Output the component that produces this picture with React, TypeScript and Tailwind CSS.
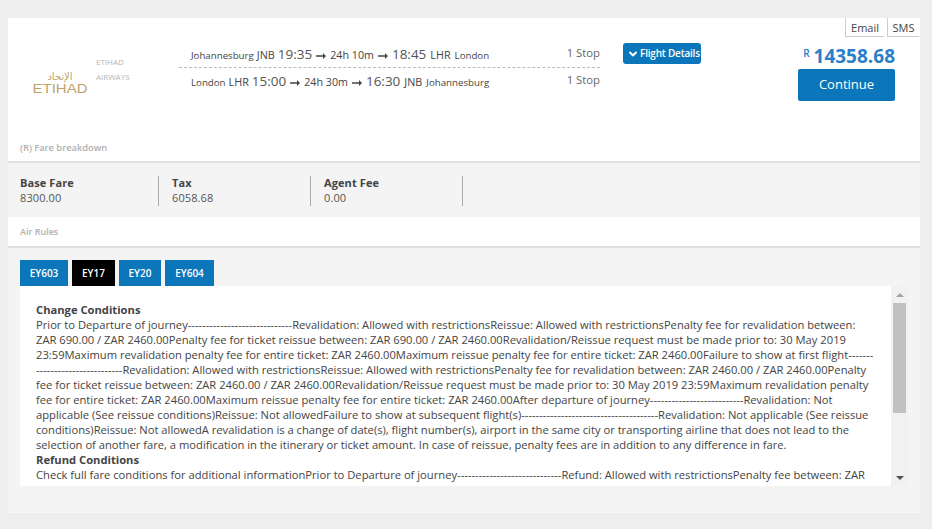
import React from 'react';
import { ChevronDown } from 'lucide-react';

const blue = 'bg-[#0b76ba]';

const tabs = [
  { name: 'EY603', width: 'w-[48px]' },
  { name: 'EY17', width: 'w-[43px]' },
  { name: 'EY20', width: 'w-[42px]' },
  { name: 'EY604', width: 'w-[49px]' },
];

const rulesLines = [
  'Prior to Departure of journey-----------------------------Revalidation: Allowed with restrictionsReissue: Allowed with restrictionsPenalty fee for revalidation between:',
  'ZAR 690.00 / ZAR 2460.00Penalty fee for ticket reissue between: ZAR 690.00 / ZAR 2460.00Revalidation/Reissue request must be made prior to: 30 May 2019',
  '23:59Maximum revalidation penalty fee for entire ticket: ZAR 2460.00Maximum reissue penalty fee for entire ticket: ZAR 2460.00Failure to show at first flight-------',
  '------------------------Revalidation: Allowed with restrictionsReissue: Allowed with restrictionsPenalty fee for revalidation between: ZAR 2460.00 / ZAR 2460.00Penalty',
  'fee for ticket reissue between: ZAR 2460.00 / ZAR 2460.00Revalidation/Reissue request must be made prior to: 30 May 2019 23:59Maximum revalidation penalty',
  'fee for entire ticket: ZAR 2460.00Maximum reissue penalty fee for entire ticket: ZAR 2460.00After departure of journey--------------------------Revalidation: Not',
  'applicable (See reissue conditions)Reissue: Not allowedFailure to show at subsequent flight(s)--------------------------------------Revalidation: Not applicable (See reissue',
  'conditions)Reissue: Not allowedA revalidation is a change of date(s), flight number(s), airport in the same city or transporting airline that does not lead to the',
  'selection of another fare, a modification in the itinerary or ticket amount. In case of reissue, penalty fees are in addition to any difference in fare.',
];

const Arrow = () => (
  <svg width="10" height="6" viewBox="0 0 10 6" className="mx-[4px] self-center -mt-[1px] shrink-0">
    <path d="M0 2.2H7V0L10 3 7 6V3.8H0Z" fill="#444" />
  </svg>
);

const Leg = ({ from, fromCode, dep, dur, arr, toCode, to }: { from: string; fromCode: string; dep: string; dur: string; arr: string; toCode: string; to: string }) => (
  <div className="flex items-baseline whitespace-nowrap text-[#444] h-[24px]">
    <span className="text-[9.7px]">{from}</span>
    <span className="text-[10.8px] ml-[3px]">{fromCode}</span>
    <span className="text-[13.5px] ml-[3px] text-[#555]">{dep}</span>
    <Arrow />
    <span className="text-[10.7px]">{dur}</span>
    <Arrow />
    <span className="text-[13.5px] text-[#555]">{arr}</span>
    <span className="text-[10.8px] ml-[4px]">{toCode}</span>
    <span className="text-[9.7px] ml-[4px]">{to}</span>
  </div>
);

const Fare = ({ label, value }: { label: string; value: string }) => (
  <div className="w-[139px] h-[30px] border-r border-[#aaa] leading-[15px] mr-[13px]">
    <div className="-mt-[1px]">
      <div className="text-[11px] font-bold text-[#444] tracking-[0.1px]">{label}</div>
      <div className="text-[11px] text-[#555] tracking-[0.1px]">{value}</div>
    </div>
  </div>
);

export default function App() {
  return (
    <div className="min-h-[529px] bg-[#eeeeee] pt-[18px] pl-[8px] pr-[12px] pb-[14px] font-['Open_Sans',sans-serif]">
      <div className="bg-[#f4f4f4] h-[497px] flex flex-col border-b border-[#e6e6e6]">
        <div className="relative bg-white h-[145px] border-b-2 border-[#e0e0e0] shrink-0">
          <div className="absolute top-0 right-[1px] flex text-[11px] text-[#444] leading-[20px] text-center">
            <span className="w-[39px] h-[19px] border-l border-b border-[#ccc] mr-[3px]">Email</span>
            <span className="w-[32px] h-[19px] border-l border-b border-[#ccc]">SMS</span>
          </div>

          <div className="flex">
            <div className="w-[171px] shrink-0 flex pl-[24px] pt-[54px]">
              <div className="w-[56px] text-center text-[#bda36a] leading-none">
                <div className="text-[10px] h-[11px] font-['DejaVu_Sans',sans-serif]">الإتحاد</div>
                <div className="text-[12px] scale-x-[1.25] font-['Liberation_Sans',sans-serif]">ETIHAD</div>
              </div>
              <div className="ml-[8px] -mt-[18px] text-[8px] leading-[15px] text-[#b5b5b5]">
                <div>ETIHAD</div>
                <div>AIRWAYS</div>
              </div>
            </div>

            <div className="w-[421px] shrink-0 pt-[25px]">
              <div className="border-b border-dashed border-[#bbb] pl-[12px] pt-[1px] h-[25px]">
                <div className="flex justify-between">
                  <Leg from="Johannesburg" fromCode="JNB" dep="19:35" dur="24h 10m" arr="18:45" toCode="LHR" to="London" />
                  <span className="text-[11.3px] text-[#666] mt-[1px]">1 Stop</span>
                </div>
              </div>
              <div className="pl-[12px] pt-[3px]">
                <div className="flex justify-between">
                  <Leg from="London" fromCode="LHR" dep="15:00" dur="24h 30m" arr="16:30" toCode="JNB" to="Johannesburg" />
                  <span className="text-[11.3px] text-[#666] mt-[1px]">1 Stop</span>
                </div>
              </div>
            </div>

            <div className="pl-[23px] pt-[25px]">
              <div className={`${blue} rounded-[3px] h-[21px] w-[78px] flex items-center pl-[4px] text-white text-[10px] font-semibold whitespace-nowrap tracking-[-0.2px]`}>
                <ChevronDown size={12} strokeWidth={4} className="shrink-0" />
                <span className="ml-[1px]">Flight Details</span>
              </div>
            </div>

            <div className="ml-auto mr-[25px] pt-[25px] w-[97px] flex flex-col items-end">
              <div className="text-[#2a80c8] font-semibold leading-[21px] h-[26px] whitespace-nowrap">
                <span className="text-[10px] align-[6px] mr-[4px]">R</span>
                <span className="text-[19px] font-bold">14358.68</span>
              </div>
              <div className={`${blue} rounded-[2px] w-[97px] h-[32px] flex items-center justify-center text-white text-[13px]`}>Continue</div>
            </div>
          </div>

          <div className="absolute left-[12px] bottom-[6px] text-[9.3px] font-semibold text-[#b0b0b0]">(R) Fare breakdown</div>
        </div>

        <div className="flex h-[54px] pt-[13px] pl-[12px] shrink-0">
          <Fare label="Base Fare" value="8300.00" />
          <Fare label="Tax" value="6058.68" />
          <Fare label="Agent Fee" value="0.00" />
        </div>

        <div className="bg-white h-[31px] border-b-2 border-[#e0e0e0] pl-[12px] pt-[8px] text-[9px] font-semibold text-[#b0b0b0] shrink-0">Air Rules</div>

        <div className="flex gap-[4px] pl-[12px] pt-[12px] shrink-0">
          {tabs.map((t) => (
            <div key={t.name} className={`${t.name === 'EY17' ? 'bg-black' : blue} ${t.width} h-[26px] flex items-center justify-center text-white text-[10px] font-semibold`}>{t.name}</div>
          ))}
        </div>

        <div className="flex ml-[12px] mr-[12px] h-[200px] shrink-0">
          <div className="bg-white flex-1 overflow-hidden pl-[16px] pt-[16px] text-[11.2px] leading-[15px] text-[#444] whitespace-nowrap">
            <div className="font-bold">Change Conditions</div>
            {rulesLines.map((l) => <div key={l}>{l}</div>)}
            <div className="font-bold">Refund Conditions</div>
            <div>Check full fare conditions for additional informationPrior to Departure of journey-----------------------------Refund: Allowed with restrictionsPenalty fee between: ZAR</div>
          </div>
          <div className="w-[17px] bg-[#f1f1f1] flex flex-col items-center shrink-0">
            <div className="h-[17px] flex items-center justify-center">
              <div className="w-0 h-0 border-l-[4px] border-r-[4px] border-b-[4px] border-l-transparent border-r-transparent border-b-[#a3a3a3]" />
            </div>
            <div className="w-[13px] h-[110px] bg-[#c1c1c1]" />
            <div className="mt-auto h-[17px] flex items-center justify-center">
              <div className="w-0 h-0 border-l-[4px] border-r-[4px] border-t-[4px] border-l-transparent border-r-transparent border-t-[#505050]" />
            </div>
          </div>
        </div>
      </div>
    </div>
  );
}
